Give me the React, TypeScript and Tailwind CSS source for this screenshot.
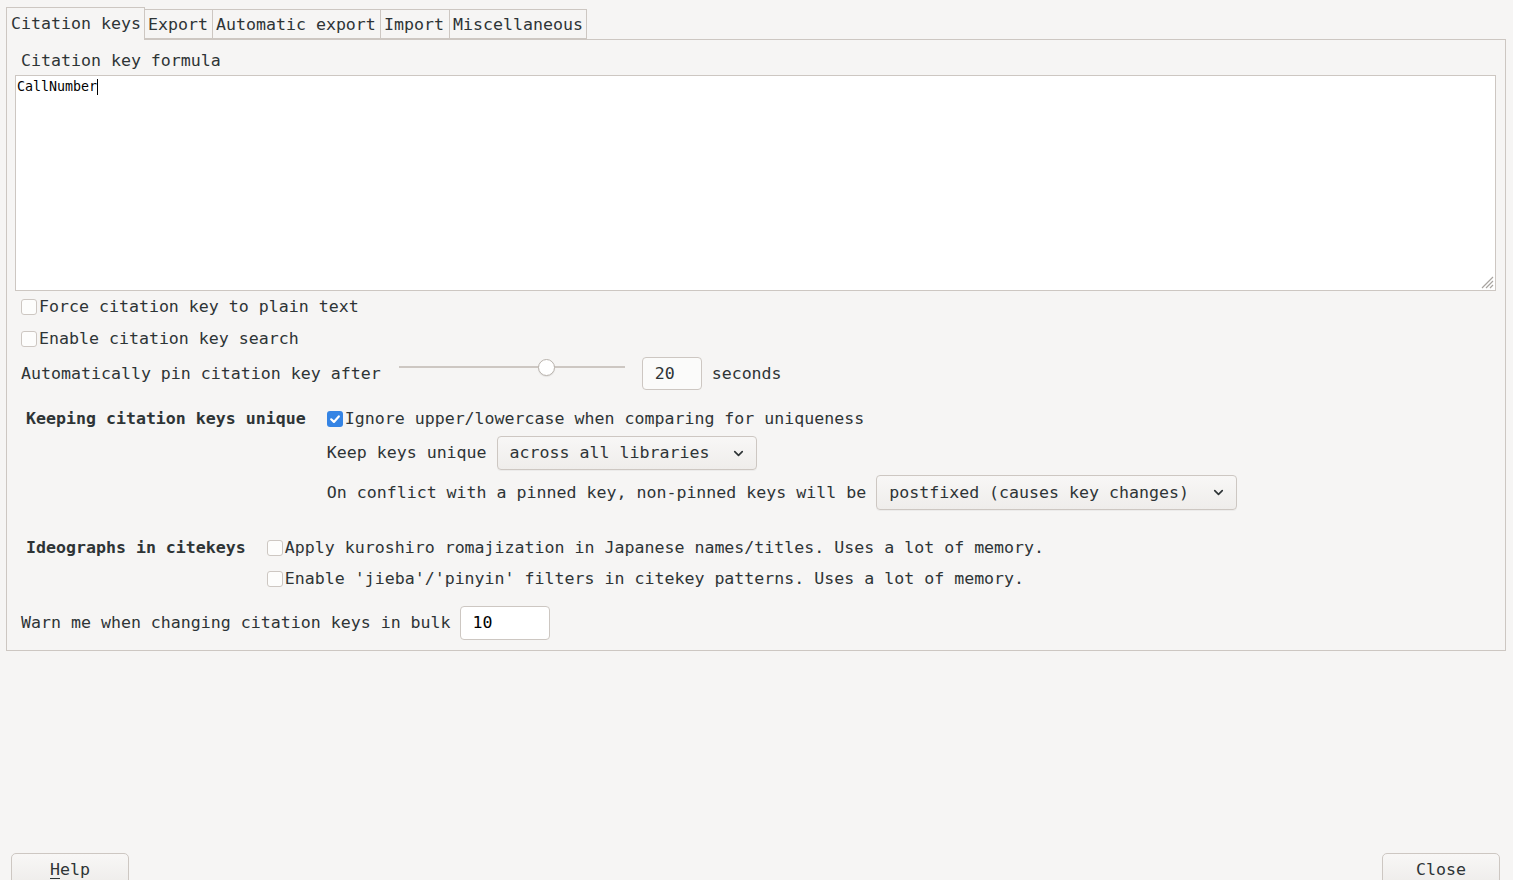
import React from 'react';
import { ChevronDown } from 'lucide-react';

const font = "font-['DejaVu_Sans_Mono','Liberation_Mono',monospace]";

function Check({ checked = false }: { checked?: boolean }) {
  if (checked) {
    return (
      <span className="w-[16px] h-[16px] shrink-0 rounded-[3px] bg-[#3584e4] flex items-center justify-center">
        <svg width="12" height="12" viewBox="0 0 12 12">
          <path d="M2.2 6.3 L4.9 8.9 L9.8 3.4" fill="none" stroke="#fff" strokeWidth="2.2" strokeLinecap="round" strokeLinejoin="round" />
        </svg>
      </span>
    );
  }
  return <span className="w-[16px] h-[16px] shrink-0 rounded-[3px] border border-[#cdc7c2] bg-[#fdfdfc]" />;
}

function CheckRow({ label, checked }: { label: string; checked?: boolean }) {
  return (
    <div className="flex items-center h-[20px] gap-[2px]">
      <Check checked={checked} />
      <span className="whitespace-pre">{label}</span>
    </div>
  );
}

function Select({ value, width, height }: { value: string; width: string; height: string }) {
  return (
    <div
      className={`${width} ${height} flex items-center justify-between pl-[12px] pr-[10px] rounded-[4px] border border-[#cdc7c2] bg-gradient-to-b from-[#f8f7f6] to-[#efedeb] shadow-[0_1px_0_rgba(0,0,0,0.04)]`}
    >
      <span className="whitespace-pre">{value}</span>
      <ChevronDown size={15} strokeWidth={2.6} className="text-[#2e3436]" />
    </div>
  );
}

const tabs = [
  { label: 'Export', w: 'w-[68px]' },
  { label: 'Automatic export', w: 'w-[168px]' },
  { label: 'Import', w: 'w-[69px]' },
  { label: 'Miscellaneous', w: 'w-[137px]' },
];

export default function App() {
  return (
    <div className={`w-[1513px] h-[880px] overflow-hidden bg-[#f6f5f4] text-[#2e3436] text-[16.6px] leading-[20px] ${font}`}>
      {/* Tab strip */}
      <div className="flex items-end pl-[6px] pt-[6px]">
        <div className="w-[139px] h-[33px] border border-b-0 border-[#cdc7c2] bg-[#f6f5f4] pl-[4px] pt-[6px] relative top-[1px] z-10">
          Citation keys
        </div>
        {tabs.map((t) => (
          <div
            key={t.label}
            className={`${t.w} h-[30px] border border-l-0 border-[#cdc7c2] pl-[3px] pt-[5px] whitespace-pre`}
          >
            {t.label}
          </div>
        ))}
      </div>

      {/* Panel */}
      <div className="mx-[6px] w-[1500px] border border-[#cdc7c2] px-[8px] pt-[11px] pb-[10px] flex flex-col">
        <div className="h-[20px] pl-[6px]">Citation key formula</div>

        <div className="mt-[4px] h-[216px] w-[1481px] bg-white border border-[#cdc7c2] relative">
          <div className="pl-[1px] pt-[3px] text-[13.3px] leading-[16px] text-black flex items-center">
            <span>CallNumber</span>
            <span className="w-[1px] h-[16px] bg-black" />
          </div>
          <svg className="absolute right-[1px] bottom-[1px]" width="14" height="14" viewBox="0 0 14 14">
            <path d="M13 2 L2 13 M13 6 L6 13 M13 10 L10 13" stroke="#a8a4a0" strokeWidth="1.2" />
          </svg>
        </div>

        <div className="pl-[6px] flex flex-col">
          <div className="mt-[6px]">
            <CheckRow label="Force citation key to plain text" />
          </div>
          <div className="mt-[12px]">
            <CheckRow label="Enable citation key search" />
          </div>

          <div className="mt-[8px] h-[33px] flex items-center">
            <span className="whitespace-pre">Automatically pin citation key after</span>
            <div className="ml-[18px] w-[226px] h-[20px] relative flex items-center -mt-[14px]">
              <div className="w-full h-[2px] bg-[#cdc7c2]" />
              <div className="absolute left-[139px] top-[2px] w-[17px] h-[17px] rounded-full bg-white border border-[#b9b3ad] shadow-[0_1px_1px_rgba(0,0,0,0.08)]" />
            </div>
            <div className="ml-[17px] w-[60px] h-[33px] rounded-[4px] border border-[#cdc7c2] bg-[#fbfbfa] flex items-center pl-[12px]">
              20
            </div>
            <span className="ml-[10px]">seconds</span>
          </div>
        </div>

        {/* Keeping citation keys unique */}
        <div className="mt-[19px] pl-[11px] flex gap-[21px]">
          <div className="h-[20px] font-bold whitespace-pre">Keeping citation keys unique</div>
          <div className="flex flex-col">
            <CheckRow label="Ignore upper/lowercase when comparing for uniqueness" checked />
            <div className="mt-[7px] flex items-center gap-[10px]">
              <span className="whitespace-pre">Keep keys unique</span>
              <Select value="across all libraries" width="w-[260px]" height="h-[34px]" />
            </div>
            <div className="mt-[5px] flex items-center gap-[10px]">
              <span className="whitespace-pre">On conflict with a pinned key, non-pinned keys will be</span>
              <Select value="postfixed (causes key changes)" width="w-[361px]" height="h-[35px]" />
            </div>
          </div>
        </div>

        {/* Ideographs */}
        <div className="mt-[28px] pl-[11px] flex gap-[21px]">
          <div className="h-[20px] font-bold whitespace-pre">Ideographs in citekeys</div>
          <div className="flex flex-col">
            <CheckRow label="Apply kuroshiro romajization in Japanese names/titles. Uses a lot of memory." />
            <div className="mt-[11px]">
              <CheckRow label="Enable 'jieba'/'pinyin' filters in citekey patterns. Uses a lot of memory." />
            </div>
          </div>
        </div>

        <div className="mt-[17px] pl-[6px] flex items-center gap-[9px]">
          <span className="whitespace-pre">Warn me when changing citation keys in bulk</span>
          <div className="w-[90px] h-[34px] rounded-[4px] border border-[#cdc7c2] bg-white flex items-center pl-[12px] text-black">
            10
          </div>
        </div>
      </div>

      {/* Dialog buttons */}
      <div className="mt-[202px] flex justify-between pl-[11px] pr-[13px]">
        <button className="w-[118px] h-[36px] rounded-[5px] border border-[#cdc7c2] bg-gradient-to-b from-[#f8f7f6] to-[#edebe9] pb-[2px] text-[#2e3436]">
          <span className="underline underline-offset-[3px]">H</span>elp
        </button>
        <button className="w-[118px] h-[36px] rounded-[5px] border border-[#cdc7c2] bg-gradient-to-b from-[#f8f7f6] to-[#edebe9] pb-[2px] text-[#2e3436]">
          Close
        </button>
      </div>
    </div>
  );
}
